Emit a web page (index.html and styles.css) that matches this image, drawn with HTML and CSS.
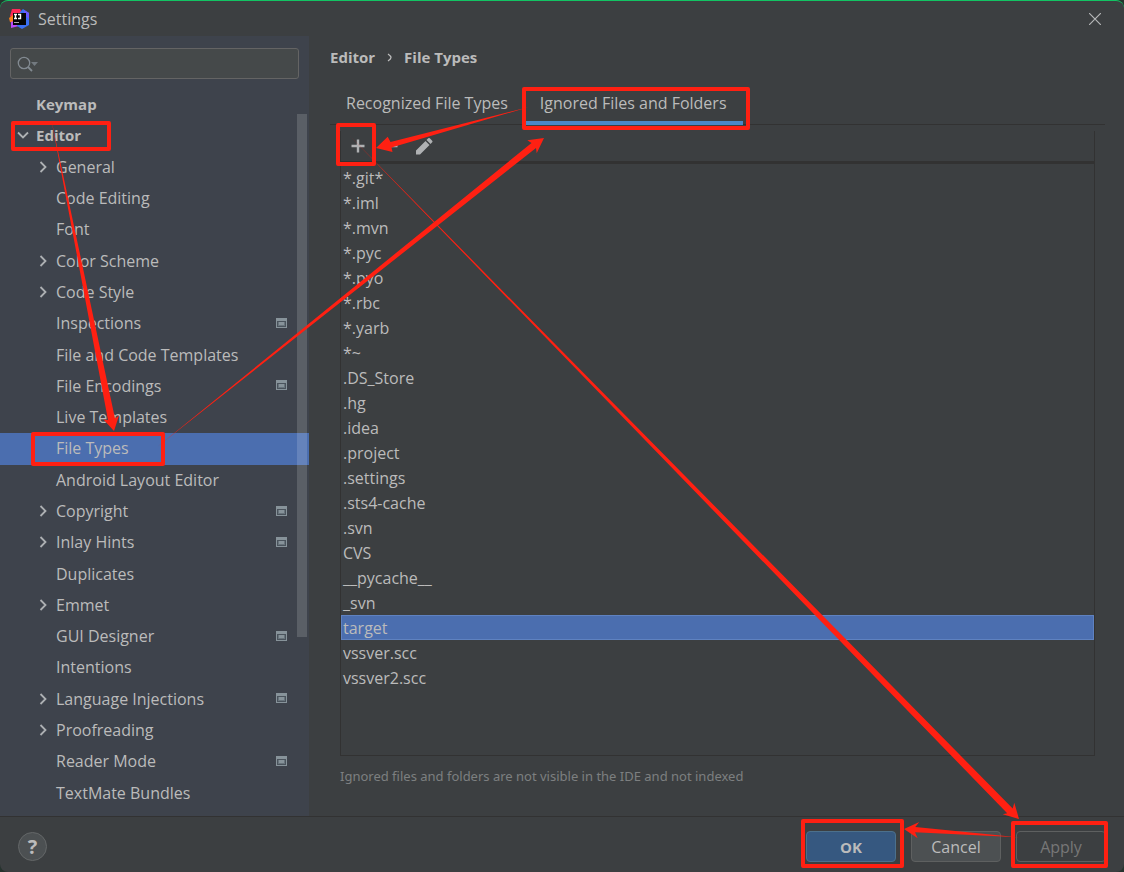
FILE: index.html
```html
<!DOCTYPE html>
<html lang="en">
<head>
<meta charset="utf-8">
<title>Settings</title>
<link rel="stylesheet" href="styles.css">
</head>
<body>
<svg class="defs" aria-hidden="true">
  <symbol id="right" viewBox="0 0 16 16"><path d="M5.500 3l5 5-5 5" fill="none" stroke="#adb0b3" stroke-width="1.800"/></symbol>
  <symbol id="down" viewBox="0 0 16 16"><path d="M3 5.500l5 5 5-5" fill="none" stroke="#adb0b3" stroke-width="1.800"/></symbol>
  <symbol id="proj" viewBox="0 0 11 11"><path d="M0 0h11v10H0z" fill="#87939a"/><path d="M1 3h9v6H1z" fill="#4a535c"/><path d="M2 4h7v4H2z" fill="#68747c"/><path d="M3 4h5v3H3z" fill="#87939a"/></symbol>
</svg>
<div class="window">
  <header class="titlebar">
    <svg class="logo" viewBox="0 0 20 20" aria-hidden="true">
      <path d="M3 0h8l3 5-8 8-5-6z" fill="#fe2857"/>
      <path d="M0 9l4-3 2 8-5-1z" fill="#fc801d"/>
      <path d="M2 13l5-2 3 6-8 2z" fill="#b74af7"/>
      <path d="M11 3l3-3 6 4v12l-7 4-5-3z" fill="#3b70f4"/>
      <path d="M15 1l5 3v6l-5-4z" fill="#6b57ff"/>
      <path d="M4 4h13v12H4z" fill="#050505"/>
      <path d="M5 5.500h3M6.500 5.500v4M5 9.500h3M9 5.500h2.500v4H9" fill="none" stroke="#fff" stroke-width="1.400"/>
      <path d="M5 13.500h5" stroke="#aaa" stroke-width="1.200"/>
    </svg>
    <h1 class="title">Settings</h1>
    <button class="close" aria-label="Close"><svg viewBox="0 0 12 12"><path d="M0 0l12 12M12 0L0 12" stroke="#b4b6b7" stroke-width="1.200"/></svg></button>
  </header>

  <div class="body">
    <aside class="sidebar">
      <label class="search">
        <svg viewBox="0 0 22 16" aria-hidden="true"><circle cx="7" cy="7" r="5.700" fill="none" stroke="#828a91" stroke-width="1.300"/><path d="M11 11l4 4" stroke="#828a91" stroke-width="1.800"/><path d="M14 6h7l-3.500 4z" fill="#737a80"/></svg>
        <input type="text" aria-label="Search settings">
      </label>
      <ul class="tree">
        <li><button class="node top">Keymap</button></li>
        <li><button class="node top"><svg class="arrow"><use href="#down"/></svg>Editor</button></li>
        <li><button class="node"><svg class="arrow"><use href="#right"/></svg>General</button></li>
        <li><button class="node">Code Editing</button></li>
        <li><button class="node">Font</button></li>
        <li><button class="node"><svg class="arrow"><use href="#right"/></svg>Color Scheme</button></li>
        <li><button class="node"><svg class="arrow"><use href="#right"/></svg>Code Style</button></li>
        <li><button class="node">Inspections<svg class="proj"><use href="#proj"/></svg></button></li>
        <li><button class="node">File and Code Templates</button></li>
        <li><button class="node">File Encodings<svg class="proj"><use href="#proj"/></svg></button></li>
        <li><button class="node">Live Templates</button></li>
        <li><button class="node selected" aria-current="page">File Types</button></li>
        <li><button class="node">Android Layout Editor</button></li>
        <li><button class="node"><svg class="arrow"><use href="#right"/></svg>Copyright<svg class="proj"><use href="#proj"/></svg></button></li>
        <li><button class="node"><svg class="arrow"><use href="#right"/></svg>Inlay Hints<svg class="proj"><use href="#proj"/></svg></button></li>
        <li><button class="node">Duplicates</button></li>
        <li><button class="node"><svg class="arrow"><use href="#right"/></svg>Emmet</button></li>
        <li><button class="node">GUI Designer<svg class="proj"><use href="#proj"/></svg></button></li>
        <li><button class="node">Intentions</button></li>
        <li><button class="node"><svg class="arrow"><use href="#right"/></svg>Language Injections<svg class="proj"><use href="#proj"/></svg></button></li>
        <li><button class="node"><svg class="arrow"><use href="#right"/></svg>Proofreading</button></li>
        <li><button class="node">Reader Mode<svg class="proj"><use href="#proj"/></svg></button></li>
        <li><button class="node">TextMate Bundles</button></li>
      </ul>
      <div class="thumb"></div>
    </aside>

    <main class="content">
      <nav class="crumbs" aria-label="Breadcrumb"><span>Editor</span><svg viewBox="0 0 5 9" aria-hidden="true"><path d="M1 1q3 2 3 3.500T1 8" fill="none" stroke="#bbb" stroke-width="1.300"/></svg><span>File Types</span></nav>
      <div class="tabs" role="tablist">
        <button class="tab" role="tab" aria-selected="false">Recognized File Types</button>
        <button class="tab active" role="tab" aria-selected="true">Ignored Files and Folders</button>
      </div>
      <section class="panel">
        <div class="toolbar">
          <button aria-label="Add"><svg viewBox="0 0 18 18"><path d="M9 2.500v13M2.500 9h13" stroke="#afb1b3" stroke-width="2.400"/></svg></button>
          <button aria-label="Remove"><svg viewBox="0 0 18 18"><path d="M2.500 9h13" stroke="#afb1b3" stroke-width="2.400"/></svg></button>
          <button aria-label="Edit"><svg viewBox="0 0 18 18"><path d="M1 13.500L10.500 4l4 4L5 17.500H1zM11.500 3l1.700-1.700q.8-.8 1.600 0l2.400 2.400q.8.800 0 1.600L15.500 7z" fill="#afb1b3"/></svg></button>
        </div>
        <ul class="list" role="listbox" aria-label="Ignored files and folders">
          <li role="option">*.git*</li>
          <li role="option">*.iml</li>
          <li role="option">*.mvn</li>
          <li role="option">*.pyc</li>
          <li role="option">*.pyo</li>
          <li role="option">*.rbc</li>
          <li role="option">*.yarb</li>
          <li role="option">*~</li>
          <li role="option">.DS_Store</li>
          <li role="option">.hg</li>
          <li role="option">.idea</li>
          <li role="option">.project</li>
          <li role="option">.settings</li>
          <li role="option">.sts4-cache</li>
          <li role="option">.svn</li>
          <li role="option">CVS</li>
          <li role="option">__pycache__</li>
          <li role="option">_svn</li>
          <li role="option" class="selected" aria-selected="true">target</li>
          <li role="option">vssver.scc</li>
          <li role="option">vssver2.scc</li>
        </ul>
      </section>
      <p class="hint">Ignored files and folders are not visible in the IDE and not indexed</p>
    </main>
  </div>

  <footer class="footer">
    <button class="help" aria-label="Help">?</button>
    <button class="btn primary">OK</button>
    <button class="btn">Cancel</button>
    <button class="btn" disabled>Apply</button>
  </footer>

  <svg class="marks" viewBox="0 0 1124 872" aria-hidden="true">
    <g fill="none" stroke="#ff2012" stroke-width="4" stroke-linejoin="round">
      <rect x="13" y="123" width="96" height="26"/>
      <rect x="33" y="434" width="130" height="30"/>
      <rect x="524" y="89" width="224" height="39"/>
      <rect x="338" y="125" width="36" height="39"/>
      <rect x="803" y="821" width="99" height="45"/>
      <rect x="1013" y="823" width="93" height="43"/>
    </g>
    <g fill="#ff2012">
      <path d="M51 118L108 420l-4.500-.5L114 431l5-15.500-4 3z"/>
      <path d="M529 107L390.500 142l-2.800-5.300L376 148l16.500 4-1-4.500z"/>
      <path d="M157 447L531.500 143l-4.200-2.700L544 138l-7.300 15.300-.7-5.300z"/>
      <path d="M349 135L1012.700 808.500l1.600-5.800L1019 819l-16.300-4.700 4.500-1z"/>
      <path d="M1019 837.300L915.300 827l4-5L904 829l13.700 9.300-2.700-6z"/>
    </g>
  </svg>
</div>
</body>
</html>
```
FILE: styles.css
```css
* { box-sizing: border-box; }

body {
  margin: 0;
  background: #26332e;
  color: #bbbbbb;
  font: 16px/20px "Open Sans", "Noto Sans", sans-serif;
}

button {
  margin: 0;
  padding: 0;
  border: 0;
  background: none;
  color: inherit;
  font: inherit;
}

ul { margin: 0; padding: 0; list-style: none; }

.defs { position: absolute; width: 0; height: 0; }

.window {
  position: relative;
  display: flex;
  flex-direction: column;
  min-height: 100vh;
  border-top: 1px solid #12c463;
  border-radius: 8px;
  background: #3c3f41;
  overflow: hidden;
}

.titlebar {
  display: flex;
  align-items: center;
  gap: 9px;
  height: 35px;
  padding: 0 23px 0 9px;
}
.logo { width: 20px; height: 20px; }
.title { flex: 1; margin: 0; font-size: 16px; font-weight: 400; }
.close svg { display: block; width: 12px; height: 12px; }

.body { display: flex; flex: 1; }

.sidebar {
  position: relative;
  display: flex;
  flex-direction: column;
  flex: 0 0 309px;
  padding: 12px 0 7px;
  background: #3e434c;
}

.search {
  display: flex;
  align-items: center;
  gap: 4px;
  height: 31px;
  margin: 0 10px 10px;
  padding: 0 6px;
  border: 1px solid #646464;
  border-radius: 3px;
  background: #45494a;
}
.search svg { width: 22px; height: 16px; }
.search input {
  flex: 1;
  min-width: 0;
  border: 0;
  outline: 0;
  background: none;
  color: inherit;
  font: inherit;
}

.tree { display: flex; flex: 1; flex-direction: column; }
.tree li { display: flex; flex: 1; }
.node {
  display: flex;
  flex: 1;
  align-items: center;
  padding: 0 22px 1px 56px;
  text-align: left;
}
.node.top { padding-bottom: 2px; padding-left: 36px; font-size: 15px; font-weight: 700; }
.node.selected { background: #4b6eaf; }
.arrow { width: 16px; height: 16px; margin: 0 5px 0 -21px; }
.proj { width: 11px; height: 11px; margin-left: auto; }

.thumb {
  position: absolute;
  top: 10%;
  right: 2px;
  width: 10px;
  height: 67%;
  background: rgba(255, 255, 255, 0.15);
}

.content {
  display: flex;
  flex: 1;
  flex-direction: column;
  min-width: 0;
  padding: 11px 19px 30px 21px;
}

.crumbs { display: flex; align-items: center; gap: 12px; font-size: 15px; font-weight: 700; }
.crumbs svg { width: 5px; height: 9px; }

.tabs { display: flex; height: 41px; margin-top: 17px; border-bottom: 1px solid #323232; }
.tab { height: 41px; padding: 0 16px; border-bottom: 4px solid transparent; }
.tab.active { border-color: #4a88c7; }

.panel {
  display: flex;
  flex: 1;
  flex-direction: column;
  margin: 6px 10px 10px;
  border: 1px solid #323232;
  border-top: 0;
}
.toolbar {
  display: flex;
  align-items: center;
  gap: 15px;
  height: 33px;
  padding-left: 8px;
  border-bottom: 3px solid #323232;
}
.toolbar svg { display: block; width: 18px; height: 18px; }

.list { padding-top: 1px; }
.list li { height: 25px; padding: 2px; line-height: 22px; }
.list .selected { background: #4b6eaf; box-shadow: inset 0 0 0 1px #5f82c0; }

.hint { margin: 0 10px; color: #7d7f80; font-family: "Noto Sans", "Open Sans", sans-serif; font-size: 13px; }

.footer {
  display: flex;
  align-items: center;
  gap: 15px;
  height: 56px;
  padding: 4px 18px 0;
  border-top: 1px solid #323232;
}
.help {
  width: 29px;
  height: 29px;
  margin-right: auto;
  border: 1px solid #646768;
  border-radius: 50%;
  background: #4c5052;
  font-size: 20px;
  font-weight: 700;
}
.btn {
  width: 90px;
  height: 31px;
  border: 1px solid #5e6060;
  border-radius: 4px;
  background: #4c5052;
}
.btn.primary { border-color: #4c708c; background: #365880; font-size: 15px; font-weight: 700; }
.btn:disabled { background: none; color: #777777; }

.marks {
  position: absolute;
  top: -1px;
  left: 0;
  width: 100%;
  pointer-events: none;
}
```
